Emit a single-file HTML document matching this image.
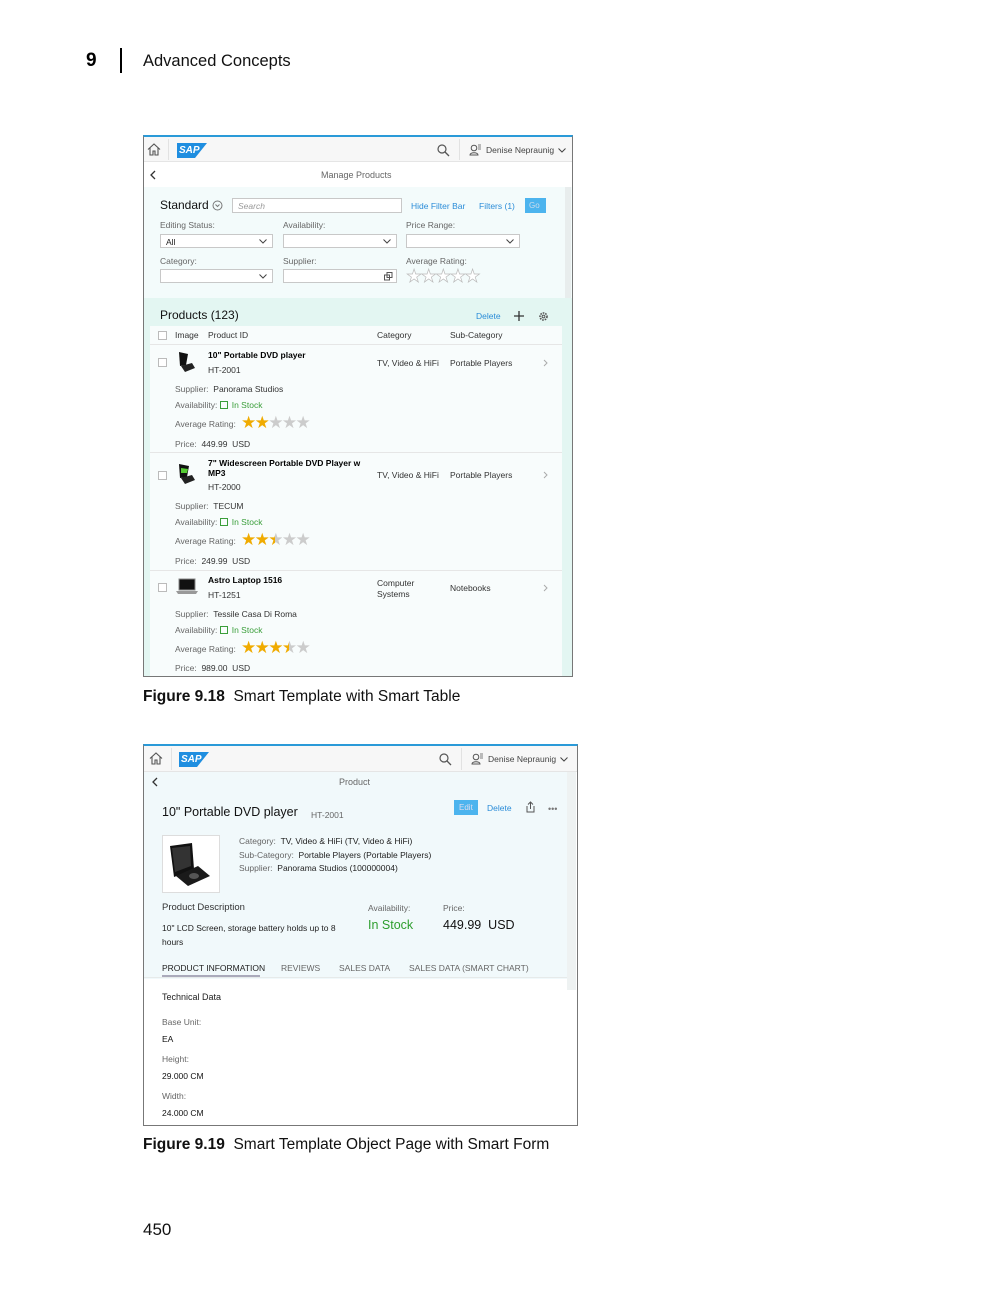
<!DOCTYPE html>
<html><head><meta charset="utf-8"><style>
*{margin:0;padding:0;box-sizing:border-box}
body{width:1000px;height:1304px;background:#fff;position:relative;font-family:"Liberation Sans",sans-serif;overflow:hidden}
.a{position:absolute;white-space:nowrap;line-height:12px}
.s{font-size:8.5px;color:#333}
.l{font-size:8.5px;color:#666}
.b{font-size:8.5px;color:#000;font-weight:bold}
.bl{color:#2a8cd8}
.g{color:#3a9e3a}
.box{position:absolute}
.inp{position:absolute;background:#fff;border:1px solid #c8c8c8;height:14px}
.chev{position:absolute;width:8px;height:5px}
.st{position:absolute;font-family:"DejaVu Sans",sans-serif;font-size:17px;line-height:17px;letter-spacing:-1.6px;color:#ccc}
.y{color:#f0ab00}
.half{background:linear-gradient(90deg,#f0ab00 50%,#ccc 50%);-webkit-background-clip:text;background-clip:text;color:transparent}
.cb{position:absolute;width:9px;height:9px;border:1px solid #bbb;background:#fff}
.gb{display:inline-block;width:8px;height:8px;border:1.5px solid #3a9e3a;vertical-align:-1px;margin-right:4px}
.sap{position:absolute;width:30px;height:15px;background:#1f8ee0;clip-path:polygon(0 0,100% 0,60% 100%,0 100%);color:#fff;font-weight:bold;font-size:10px;line-height:15px;padding-left:2px;font-style:italic}
.serif{font-family:"Liberation Sans",sans-serif}
</style></head><body>
<svg width="0" height="0" style="position:absolute"><defs><symbol id="cv" viewBox="0 0 8 5"><path d="M0.5 0.5 4 4 7.5 0.5" fill="none" stroke="#444" stroke-width="1"/></symbol></defs></svg>

<div class="a serif" style="left:86px;top:50px;font-size:19px;line-height:22px;font-weight:bold;color:#000">9</div>
<div class="box" style="left:120px;top:48px;width:1.5px;height:25px;background:#000"></div>
<div class="a serif" style="left:143px;top:51px;font-size:16.5px;line-height:20px;color:#111">Advanced Concepts</div>

<!-- FIGURE 1 -->
<div class="box" style="left:143px;top:135px;width:430px;height:542px;border:1px solid #777;border-top:2px solid #2a9ad8;background:#f3fbfb;overflow:hidden"></div>
<div class="box" style="left:144px;top:137px;width:428px;height:25px;background:#f7f7f7;border-bottom:1px solid #e5e5e5"></div>
<svg class="box" style="left:147px;top:143px" width="14" height="13" viewBox="0 0 14 13"><path d="M1 6.5 7 1l6 5.5M3 5v7h3V8h2v4h3V5" fill="none" stroke="#555" stroke-width="1.1"/></svg>
<div class="box" style="left:168px;top:139px;width:1px;height:21px;background:#e2e2e2"></div>
<div class="sap" style="left:177px;top:143px">SAP</div>
<svg class="box" style="left:437px;top:144px" width="13" height="13"><circle cx="5" cy="5" r="4" fill="none" stroke="#555" stroke-width="1.2"/><path d="M8 8l4 4" stroke="#555" stroke-width="1.3"/></svg>
<div class="box" style="left:459px;top:139px;width:1px;height:21px;background:#e2e2e2"></div>
<svg class="box" style="left:469px;top:144px" width="12" height="12"><circle cx="5" cy="4" r="2.8" fill="none" stroke="#555"/><path d="M1 11c0-3 8-3 8 0z" fill="none" stroke="#555"/><path d="M9 1h3M9 3h3M9 5h3" stroke="#555" stroke-width=".8"/></svg>
<div class="a s" style="left:486px;top:144px;color:#444">Denise Nepraunig</div>
<svg class="chev" style="left:558px;top:148px"><use href="#cv"/></svg>
<div class="box" style="left:144px;top:162px;width:428px;height:25px;background:#fff"></div>
<svg class="box" style="left:150px;top:170px" width="6" height="10"><path d="M5 1 1 5l4 4" fill="none" stroke="#333" stroke-width="1.3"/></svg>
<div class="a s" style="left:321px;top:169px;color:#666;font-size:9px">Manage Products</div>
<div class="box" style="left:565px;top:187px;width:6px;height:175px;background:#e8eded"></div>

<div class="a" style="left:160px;top:199px;font-size:12px;color:#111">Standard</div>
<svg class="box" style="left:212px;top:200px" width="11" height="11"><circle cx="5.5" cy="5.5" r="4.5" fill="none" stroke="#777"/><path d="M3.5 4.5l2 2 2-2" fill="none" stroke="#777"/></svg>
<div class="inp" style="left:232px;top:198px;width:170px;height:15px"></div>
<div class="a" style="left:238px;top:200px;font-size:8.5px;color:#999;font-style:italic">Search</div>
<div class="a s bl" style="left:411px;top:200px">Hide Filter Bar</div>
<div class="a s bl" style="left:479px;top:200px">Filters (1)</div>
<div class="box" style="left:525px;top:198px;width:21px;height:15px;background:#4cb4ee"></div>
<div class="a" style="left:529px;top:200px;font-size:8px;color:#cde">Go</div>

<div class="a l" style="left:160px;top:219px">Editing Status:</div>
<div class="a l" style="left:283px;top:219px">Availability:</div>
<div class="a l" style="left:406px;top:219px">Price Range:</div>
<div class="inp" style="left:160px;top:234px;width:113px"></div><div class="a s" style="left:166px;top:236px;color:#222">All</div><svg class="chev" style="left:259px;top:239px"><use href="#cv"/></svg>
<div class="inp" style="left:283px;top:234px;width:114px"></div><svg class="chev" style="left:383px;top:239px"><use href="#cv"/></svg>
<div class="inp" style="left:406px;top:234px;width:114px"></div><svg class="chev" style="left:506px;top:239px"><use href="#cv"/></svg>
<div class="a l" style="left:160px;top:255px">Category:</div>
<div class="a l" style="left:283px;top:255px">Supplier:</div>
<div class="a l" style="left:406px;top:255px">Average Rating:</div>
<div class="inp" style="left:160px;top:269px;width:113px"></div><svg class="chev" style="left:259px;top:274px"><use href="#cv"/></svg>
<div class="inp" style="left:283px;top:269px;width:114px"></div>
<svg class="box" style="left:384px;top:272px" width="9" height="9"><rect x="0.5" y="3" width="5" height="5" fill="none" stroke="#555"/><rect x="3" y="0.5" width="5" height="5" fill="none" stroke="#555"/></svg>
<div class="st" style="left:406px;top:268px;color:#fff;-webkit-text-stroke:0.7px #bbb;font-size:18px;letter-spacing:-1.5px">★★★★★</div>

<div class="box" style="left:144px;top:298px;width:428px;height:378px;background:#e3f6f2"></div>
<div class="box" style="left:150px;top:326px;width:412px;height:350px;background:#f8fcfc"></div>
<div class="a" style="left:160px;top:309px;font-size:12px;color:#111">Products (123)</div>
<div class="a s bl" style="left:476px;top:310px">Delete</div>
<svg class="box" style="left:514px;top:311px" width="10" height="10"><path d="M5 0v10M0 5h10" stroke="#333" stroke-width="1.3"/></svg>
<svg class="box" style="left:538px;top:311px" width="11" height="11"><circle cx="5.5" cy="5.5" r="3.5" fill="none" stroke="#555" stroke-width="1.6" stroke-dasharray="1.6 1"/><circle cx="5.5" cy="5.5" r="1.4" fill="none" stroke="#555"/></svg>
<div class="box" style="left:150px;top:344px;width:412px;height:1px;background:#e6e6e6"></div>
<div class="cb" style="left:158px;top:331px"></div>
<div class="a s" style="left:175px;top:329px">Image</div>
<div class="a s" style="left:208px;top:329px">Product ID</div>
<div class="a s" style="left:377px;top:329px">Category</div>
<div class="a s" style="left:450px;top:329px">Sub-Category</div>

<div class="cb" style="left:158px;top:358px"></div>
<svg class="box" style="left:176px;top:351px" width="20" height="22"><path d="M3 1l9 2-2 11-6 1z" fill="#111"/><path d="M5 15l11-3 3 5-10 4z" fill="#222"/></svg>
<div class="a b" style="left:208px;top:349px">10" Portable DVD player</div>
<div class="a s" style="left:208px;top:364px">HT-2001</div>
<div class="a s" style="left:377px;top:357px">TV, Video &amp; HiFi</div>
<div class="a s" style="left:450px;top:357px">Portable Players</div>
<svg class="box" style="left:543px;top:359px" width="5" height="8"><path d="M1 1l3 3-3 3" fill="none" stroke="#aaa"/></svg>
<div class="a l" style="left:175px;top:383px">Supplier: <span style="color:#333">&nbsp;Panorama Studios</span></div>
<div class="a l" style="left:175px;top:399px">Availability: <span class="gb"></span><span class="g">In Stock</span></div>
<div class="a l" style="left:175px;top:418px">Average Rating:</div>
<div class="st" style="left:241px;top:415px"><span class="y">★★</span>★★★</div>
<div class="a l" style="left:175px;top:438px">Price: <span style="color:#333">&nbsp;449.99 &nbsp;USD</span></div>
<div class="box" style="left:150px;top:452px;width:412px;height:1px;background:#e6e6e6"></div>

<div class="cb" style="left:158px;top:471px"></div>
<svg class="box" style="left:176px;top:463px" width="20" height="22"><path d="M3 1l10 2-2 11-7 1z" fill="#111"/><path d="M5 5l7 1-1 4-6 0z" fill="#5c3"/><path d="M5 15l11-3 3 5-10 4z" fill="#222"/></svg>
<div class="a b" style="left:208px;top:457px">7" Widescreen Portable DVD Player w</div>
<div class="a b" style="left:208px;top:467px">MP3</div>
<div class="a s" style="left:208px;top:481px">HT-2000</div>
<div class="a s" style="left:377px;top:469px">TV, Video &amp; HiFi</div>
<div class="a s" style="left:450px;top:469px">Portable Players</div>
<svg class="box" style="left:543px;top:471px" width="5" height="8"><path d="M1 1l3 3-3 3" fill="none" stroke="#aaa"/></svg>
<div class="a l" style="left:175px;top:500px">Supplier: <span style="color:#333">&nbsp;TECUM</span></div>
<div class="a l" style="left:175px;top:516px">Availability: <span class="gb"></span><span class="g">In Stock</span></div>
<div class="a l" style="left:175px;top:535px">Average Rating:</div>
<div class="st" style="left:241px;top:532px"><span class="y">★★</span><span class="half">★</span>★★</div>
<div class="a l" style="left:175px;top:555px">Price: <span style="color:#333">&nbsp;249.99 &nbsp;USD</span></div>
<div class="box" style="left:150px;top:570px;width:412px;height:1px;background:#e6e6e6"></div>

<div class="cb" style="left:158px;top:583px"></div>
<svg class="box" style="left:176px;top:578px" width="22" height="18"><rect x="3" y="1" width="16" height="11" fill="#111" stroke="#888"/><path d="M0 13h22l-2 3H2z" fill="#999"/></svg>
<div class="a b" style="left:208px;top:574px">Astro Laptop 1516</div>
<div class="a s" style="left:208px;top:589px">HT-1251</div>
<div class="a s" style="left:377px;top:577px">Computer</div>
<div class="a s" style="left:377px;top:588px">Systems</div>
<div class="a s" style="left:450px;top:582px">Notebooks</div>
<svg class="box" style="left:543px;top:584px" width="5" height="8"><path d="M1 1l3 3-3 3" fill="none" stroke="#aaa"/></svg>
<div class="a l" style="left:175px;top:608px">Supplier: <span style="color:#333">&nbsp;Tessile Casa Di Roma</span></div>
<div class="a l" style="left:175px;top:624px">Availability: <span class="gb"></span><span class="g">In Stock</span></div>
<div class="a l" style="left:175px;top:643px">Average Rating:</div>
<div class="st" style="left:241px;top:640px"><span class="y">★★★</span><span class="half">★</span>★</div>
<div class="a l" style="left:175px;top:662px">Price: <span style="color:#333">&nbsp;989.00 &nbsp;USD</span></div>

<div class="a serif" style="left:143px;top:687px;font-size:15.5px;line-height:19px;color:#111"><b>Figure 9.18</b>&nbsp; Smart Template with Smart Table</div>

<!-- FIGURE 2 -->
<div class="box" style="left:143px;top:744px;width:435px;height:382px;border:1px solid #777;border-top:2px solid #2a9ad8;background:#fff"></div>
<div class="box" style="left:144px;top:746px;width:433px;height:26px;background:#f7f7f7;border-bottom:1px solid #e5e5e5"></div>
<svg class="box" style="left:149px;top:752px" width="14" height="13" viewBox="0 0 14 13"><path d="M1 6.5 7 1l6 5.5M3 5v7h3V8h2v4h3V5" fill="none" stroke="#555" stroke-width="1.1"/></svg>
<div class="box" style="left:171px;top:748px;width:1px;height:22px;background:#e2e2e2"></div>
<div class="sap" style="left:179px;top:752px">SAP</div>
<svg class="box" style="left:439px;top:753px" width="13" height="13"><circle cx="5" cy="5" r="4" fill="none" stroke="#555" stroke-width="1.2"/><path d="M8 8l4 4" stroke="#555" stroke-width="1.3"/></svg>
<div class="box" style="left:461px;top:748px;width:1px;height:22px;background:#e2e2e2"></div>
<svg class="box" style="left:471px;top:753px" width="12" height="12"><circle cx="5" cy="4" r="2.8" fill="none" stroke="#555"/><path d="M1 11c0-3 8-3 8 0z" fill="none" stroke="#555"/><path d="M9 1h3M9 3h3M9 5h3" stroke="#555" stroke-width=".8"/></svg>
<div class="a s" style="left:488px;top:753px;color:#444">Denise Nepraunig</div>
<svg class="chev" style="left:560px;top:757px"><use href="#cv"/></svg>
<div class="box" style="left:144px;top:772px;width:423px;height:207px;background:#f1f9fb"></div>
<div class="box" style="left:567px;top:772px;width:9px;height:218px;background:#eef2f2"></div>
<svg class="box" style="left:152px;top:777px" width="6" height="10"><path d="M5 1 1 5l4 4" fill="none" stroke="#333" stroke-width="1.3"/></svg>
<div class="a s" style="left:339px;top:776px;color:#666;font-size:9px">Product</div>

<div class="a" style="left:162px;top:806px;font-size:12.5px;color:#111">10" Portable DVD player</div>
<div class="a l" style="left:311px;top:809px">HT-2001</div>
<div class="box" style="left:454px;top:800px;width:24px;height:15px;background:#4cb4ee"></div>
<div class="a" style="left:459px;top:802px;font-size:8px;color:#dde">Edit</div>
<div class="a s bl" style="left:487px;top:802px">Delete</div>
<svg class="box" style="left:525px;top:801px" width="11" height="12"><path d="M2 5v6h7V5M5.5 1v7M3 3.5l2.5-2.5 2.5 2.5" fill="none" stroke="#555"/></svg>
<div class="a" style="left:548px;top:803px;font-size:9px;color:#777">•••</div>

<div class="box" style="left:162px;top:835px;width:58px;height:58px;background:#fff;border:1px solid #ddd"></div>
<svg class="box" style="left:166px;top:840px" width="50" height="48"><path d="M4 6l22 -3 2 26-20 8z" fill="#111"/><path d="M6 8l18-2 1 20-16 6z" fill="#333"/><path d="M10 36l22-10 12 10-22 10z" fill="#1a1a1a"/><ellipse cx="28" cy="36" rx="5" ry="3" fill="#555"/></svg>
<div class="a l" style="left:239px;top:835px">Category: <span style="color:#222">&nbsp;TV, Video &amp; HiFi (TV, Video &amp; HiFi)</span></div>
<div class="a l" style="left:239px;top:849px">Sub-Category: <span style="color:#222">&nbsp;Portable Players (Portable Players)</span></div>
<div class="a l" style="left:239px;top:862px">Supplier: <span style="color:#222">&nbsp;Panorama Studios (100000004)</span></div>

<div class="a" style="left:162px;top:902px;font-size:9.5px;color:#333">Product Description</div>
<div class="a s" style="left:162px;top:922px;color:#222">10" LCD Screen, storage battery holds up to 8</div>
<div class="a s" style="left:162px;top:936px;color:#222">hours</div>
<div class="a l" style="left:368px;top:902px">Availability:</div>
<div class="a l" style="left:443px;top:902px">Price:</div>
<div class="a" style="left:368px;top:918px;font-size:12.5px;line-height:15px;color:#2e9e2e">In Stock</div>
<div class="a" style="left:443px;top:918px;font-size:12.5px;line-height:15px;color:#111">449.99 &nbsp;USD</div>

<div class="a s" style="left:162px;top:962px;color:#222">PRODUCT INFORMATION</div>
<div class="a l" style="left:281px;top:962px">REVIEWS</div>
<div class="a l" style="left:339px;top:962px">SALES DATA</div>
<div class="a l" style="left:409px;top:962px">SALES DATA (SMART CHART)</div>
<div class="box" style="left:162px;top:975px;width:98px;height:2px;background:#aab"></div>
<div class="box" style="left:144px;top:977px;width:423px;height:1px;background:#e6eaea"></div>

<div class="a" style="left:162px;top:991px;font-size:9px;color:#222">Technical Data</div>
<div class="a l" style="left:162px;top:1016px">Base Unit:</div>
<div class="a s" style="left:162px;top:1033px;color:#111">EA</div>
<div class="a l" style="left:162px;top:1053px">Height:</div>
<div class="a s" style="left:162px;top:1070px;color:#111">29.000 CM</div>
<div class="a l" style="left:162px;top:1090px">Width:</div>
<div class="a s" style="left:162px;top:1107px;color:#111">24.000 CM</div>

<div class="a serif" style="left:143px;top:1135px;font-size:15.5px;line-height:19px;color:#111"><b>Figure 9.19</b>&nbsp; Smart Template Object Page with Smart Form</div>

<div class="a serif" style="left:143px;top:1220px;font-size:17px;line-height:20px;color:#111">450</div>
</body></html>
